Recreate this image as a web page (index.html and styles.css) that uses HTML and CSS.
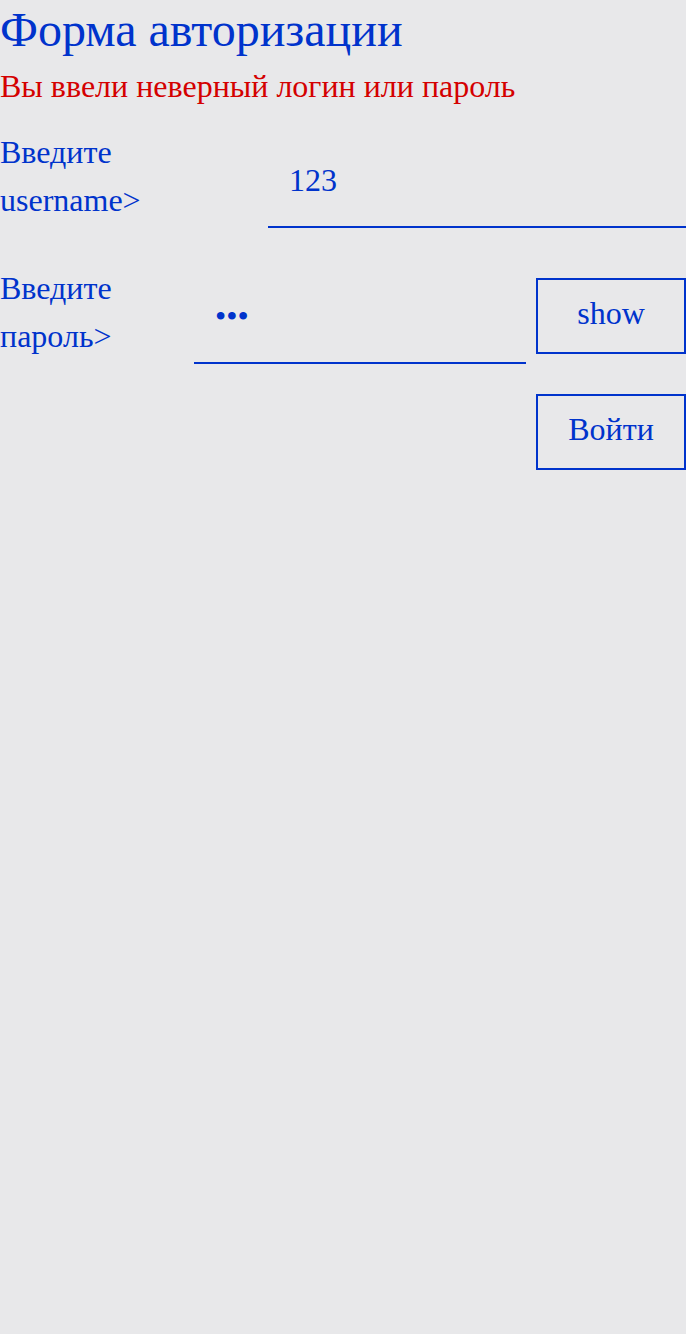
FILE: index.html
```html
<!DOCTYPE html>
<html lang="ru">
<head>
    <meta charset="UTF-8">
    <meta name="viewport" content="width=device-width, initial-scale=1.0">
    <title>Форма авторизации</title>
    <link rel="stylesheet" href="styles.css">
</head>
<body>
    <h1>Форма авторизации</h1>
    <div class="error">Вы ввели неверный логин или пароль</div>
    <form class="login-form">
        <div class="row">
            <label for="username" class="label label-user">Введите username&gt;</label>
            <input type="text" id="username" class="field" value="123">
        </div>
        <div class="row">
            <label for="password" class="label label-pass">Введите пароль&gt;</label>
            <input type="password" id="password" class="field" value="123">
            <button type="button" class="btn btn-show">show</button>
        </div>
        <div class="actions">
            <button type="submit" class="btn">Войти</button>
        </div>
    </form>
</body>
</html>
```

FILE: styles.css
```css
* {
    box-sizing: border-box;
}
body {
    margin: 0;
    background-color: #e8e8ea;
    color: #0033cc;
    font-family: "Liberation Serif", "Times New Roman", serif;
    font-size: 32px;
}
h1 {
    margin: 0 0 2px;
    font-size: 48px;
    font-weight: normal;
    line-height: 60px;
}
.error {
    color: #d40000;
    line-height: 48px;
}
.login-form {
    margin-top: 18px;
}
.row {
    display: flex;
    align-items: center;
    margin-bottom: 36px;
}
.label {
    flex: none;
    align-self: flex-start;
    width: 140px;
    line-height: 48px;
}
.label-user {
    margin-right: 128px;
}
.label-pass {
    margin-right: 54px;
}
.field {
    flex: 1;
    min-width: 0;
    height: 100px;
    padding: 6px 0 0 21px;
    border: none;
    border-bottom: 2px solid #0033cc;
    background: transparent;
    color: #0033cc;
    font-family: inherit;
    font-size: 32px;
    outline: none;
}
.btn {
    flex: none;
    width: 150px;
    height: 76px;
    margin-left: 10px;
    padding: 0 0 5px;
    border: 2px solid #0033cc;
    background: transparent;
    color: #0033cc;
    font-family: inherit;
    font-size: 32px;
    cursor: pointer;
}
.btn-show {
    margin-top: 4px;
}
.actions {
    display: flex;
    justify-content: flex-end;
    margin-top: -6px;
}
```
